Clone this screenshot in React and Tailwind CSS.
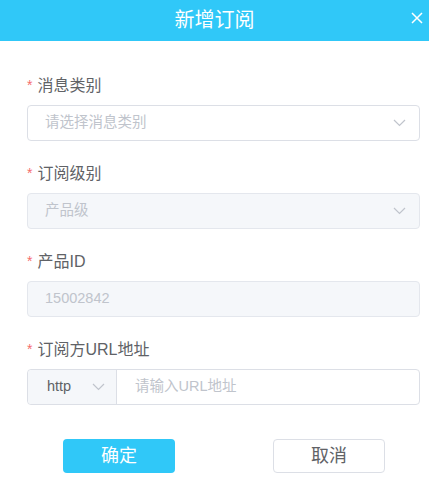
import React from 'react';

const font = { fontFamily: '"Liberation Sans", "Noto Sans CJK SC", sans-serif' };

function Chevron({ className = '' }) {
    return (
        <svg className={className} width="13" height="8" viewBox="0 0 13 8" fill="none">
            <path d="M1 1l5.5 5.5L12 1" stroke="#c0c4cc" strokeWidth="1.2" />
        </svg>
    );
}

function Label({ children }) {
    return (
        <div className="h-5 flex items-center text-[16px] text-[#606266] mb-[9px]">
            <span className="text-[#f56c6c] mr-[5px] text-[14px] leading-none -mt-[3px]">*</span>
            {children}
        </div>
    );
}

function Field({ label, children }) {
    return (
        <div className="mb-[23px]">
            <Label>{label}</Label>
            {children}
        </div>
    );
}

export default function App() {
    return (
        <div className="w-[429px] h-[501px] bg-white" style={font}>
            <div className="relative h-[41px] bg-[#30c8f8] flex items-center justify-center">
                <span className="text-white text-[20px] -mt-[1px]">新增订阅</span>
                <svg className="absolute right-[6px] top-[12px]" width="12" height="12" viewBox="0 0 12 12">
                    <path d="M1 1l10 10M11 1L1 11" stroke="white" strokeWidth="1.5" />
                </svg>
            </div>

            <div className="pt-[35px] pl-[27px] pr-[9px]">
                <Field label="消息类别">
                    <div className="h-9 border border-[#dcdfe6] rounded flex items-center justify-between pl-[17px] pr-[13px]">
                        <span className="text-[14.5px] text-[#c0c4cc]">请选择消息类别</span>
                        <Chevron />
                    </div>
                </Field>

                <Field label="订阅级别">
                    <div className="h-9 border border-[#e4e7ed] bg-[#f5f7fa] rounded flex items-center justify-between pl-[17px] pr-[13px]">
                        <span className="text-[14.5px] text-[#c0c4cc]">产品级</span>
                        <Chevron />
                    </div>
                </Field>

                <Field label="产品ID">
                    <div className="h-9 border border-[#e4e7ed] bg-[#f5f7fa] rounded flex items-center pl-[17px]">
                        <span className="text-[14.5px] text-[#c0c4cc]">15002842</span>
                    </div>
                </Field>

                <Field label="订阅方URL地址">
                    <div className="h-9 border border-[#dcdfe6] rounded flex">
                        <div className="w-[89px] bg-[#f5f7fa] border-r border-[#dcdfe6] rounded-l flex items-center pl-[19px]">
                            <span className="text-[14.5px] text-[#606266]">http</span>
                            <Chevron className="ml-[21px]" />
                        </div>
                        <div className="flex-1 flex items-center pl-[18px]">
                            <span className="text-[14.5px] text-[#c0c4cc]">请输入URL地址</span>
                        </div>
                    </div>
                </Field>
            </div>

            <div className="flex pt-[11px] pl-[63px] gap-[98px]">
                <button className="w-[112px] h-[34px] bg-[#30c8f8] text-white text-[18px] rounded">确定</button>
                <button className="w-[112px] h-[34px] border border-[#dcdfe6] text-[#606266] text-[18px] rounded">取消</button>
            </div>
        </div>
    );
}
